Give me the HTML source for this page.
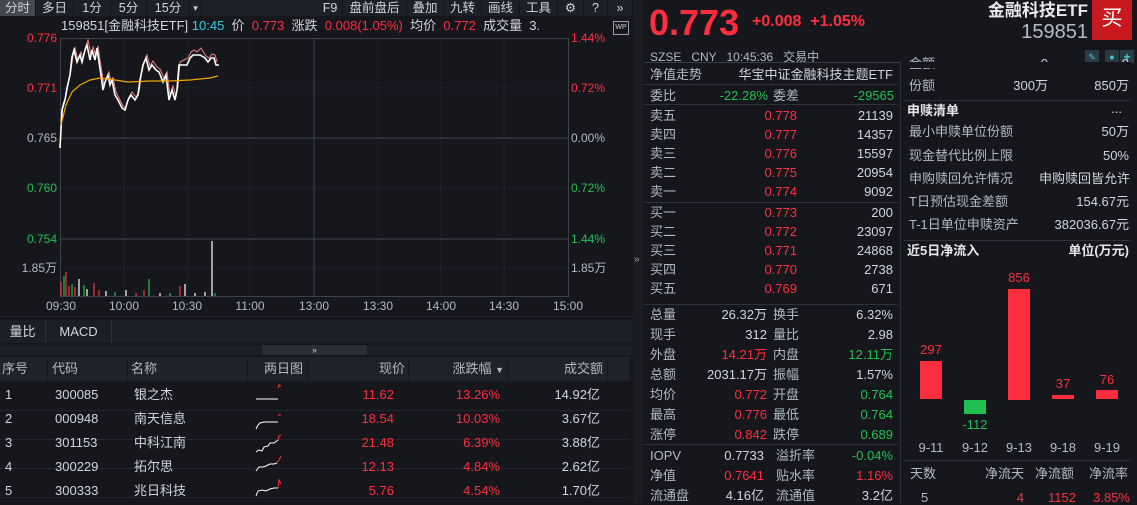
<!DOCTYPE html>
<html><head><meta charset="utf-8"><style>
*{margin:0;padding:0;box-sizing:border-box}
body{width:1137px;height:503px;background:#15171c;color:#d2d6dc;font-family:"Liberation Sans","Noto Sans CJK SC",sans-serif;font-size:12px;position:relative;overflow:hidden}
.a{position:absolute;white-space:nowrap;line-height:14px}
.r{color:#ff2e3e}.g{color:#20c050}.l{color:#b4b9c0}
.ra{text-align:right}
.hl{position:absolute;height:1px;background:#2e323a}
.vl{position:absolute;width:1px;background:#2e323a}
.tb{position:absolute;top:0;height:16px;background:#1d2027;line-height:16px;font-size:12.5px;color:#d0d4da;text-align:center;border-right:1px solid #121418}
</style></head><body>
<!-- toolbar -->
<div class="tb" style="left:0;width:36px;background:#454850">分时</div>
<div class="tb" style="left:36px;width:38px">多日</div>
<div class="tb" style="left:74px;width:37px">1分</div>
<div class="tb" style="left:111px;width:36px">5分</div>
<div class="tb" style="left:147px;width:43px">15分</div>
<div class="tb" style="left:190px;width:12px;font-size:9px">▾</div>
<div class="tb" style="left:202px;width:116px;background:#1d2027;border:none"></div>
<div class="tb" style="left:318px;width:25px">F9</div>
<div class="tb" style="left:343px;width:64px">盘前盘后</div>
<div class="tb" style="left:407px;width:37px">叠加</div>
<div class="tb" style="left:444px;width:38px">九转</div>
<div class="tb" style="left:482px;width:38px">画线</div>
<div class="tb" style="left:520px;width:38px">工具</div>
<div class="tb" style="left:558px;width:26px">⚙</div>
<div class="tb" style="left:584px;width:24px">?</div>
<div class="tb" style="left:608px;width:25px">»</div>
<!-- info line -->
<div class="a" style="left:61px;top:19px;font-size:13px">159851[金融科技ETF] <span style="color:#2fd0e0">10:45</span> &nbsp;价 &nbsp;<span class="r">0.773</span> &nbsp;涨跌 &nbsp;<span class="r">0.008(1.05%)</span> &nbsp;均价 &nbsp;<span class="r">0.772</span> &nbsp;成交量 &nbsp;3.</div>
<div class="a" style="left:613px;top:21px;width:16px;height:14px;border:1px solid #9aa0a8;font-size:7px;line-height:12px;text-align:center;color:#cfd3d8">WP</div>
<!-- chart svg -->
<svg class="a" style="left:0;top:0" width="640" height="318">
<g stroke="#3a3e46" stroke-dasharray="1,3" fill="none">
<line x1="60" y1="88" x2="568" y2="88"/><line x1="60" y1="188" x2="568" y2="188"/><line x1="60" y1="268" x2="568" y2="268"/>
<line x1="124" y1="38" x2="124" y2="296"/><line x1="187" y1="38" x2="187" y2="296"/><line x1="250" y1="38" x2="250" y2="296"/>
<line x1="378" y1="38" x2="378" y2="296"/><line x1="441" y1="38" x2="441" y2="296"/><line x1="504" y1="38" x2="504" y2="296"/>
</g>
<g stroke="#3e424a" fill="none">
<rect x="60.5" y="38.5" width="508" height="258"/>
<line x1="60" y1="138" x2="568" y2="138"/><line x1="60" y1="239" x2="568" y2="239"/>
<line x1="314" y1="38" x2="314" y2="296"/>
</g>
<polyline fill="none" stroke="#f08080" stroke-width="1" points="61,130 63,104 66,96 68,84 71,70 73,55 75,48 78,60 81,52 83,58 86,46 88,40 91,55 93,47 96,56 98,46 100,60 102,73 104,86 106,80 109,72 111,82 113,78 116,92 119,98 123,106 126,108 129,97 132,92 136,97 139,92 141,77 144,62 147,55 150,66 153,61 157,67 160,69 164,78 167,72 170,96 173,86 176,96 178,86 180,62 184,60 188,58 191,52 194,50 197,52 201,48 206,56 209,58 212,54 215,55 217,62"/>
<polyline fill="none" stroke="#ffffff" stroke-width="1.6" points="60,148 62,110 65,100 67,88 70,75 72,57 74,50 77,62 80,55 82,62 85,50 87,45 90,60 92,50 95,60 97,48 99,62 101,75 103,90 105,82 108,75 110,85 112,80 115,95 118,100 122,108 125,110 128,100 131,95 135,100 138,95 140,80 143,65 146,58 149,70 152,65 156,70 159,72 163,82 166,75 169,100 172,90 175,100 177,90 179,65 183,65 187,65 190,58 193,55 196,55 200,55 205,58 208,62 211,58 214,58 216,65 219,65"/>
<polyline fill="none" stroke="#f0a800" stroke-width="1.2" points="61,125 66,105 72,92 80,85 90,80 100,78 115,80 128,82 150,81 170,81 190,80 210,78 218,76"/>
<g stroke-width="1.2">
<line x1="61" y1="296" x2="61" y2="282" stroke="#ff3040"/><line x1="64" y1="296" x2="64" y2="276" stroke="#20c050"/><line x1="66" y1="296" x2="66" y2="272" stroke="#ff3040"/><line x1="69" y1="296" x2="69" y2="286" stroke="#ff3040"/><line x1="72" y1="296" x2="72" y2="284" stroke="#20c050"/><line x1="75" y1="296" x2="75" y2="287" stroke="#ff3040"/><line x1="79" y1="296" x2="79" y2="279" stroke="#fff"/><line x1="84" y1="296" x2="84" y2="285" stroke="#20c050"/><line x1="87" y1="296" x2="87" y2="289" stroke="#fff"/><line x1="94" y1="296" x2="94" y2="283" stroke="#ff3040"/><line x1="99" y1="296" x2="99" y2="290" stroke="#ff3040"/><line x1="106" y1="296" x2="106" y2="291" stroke="#fff"/><line x1="115" y1="296" x2="115" y2="292" stroke="#20c050"/><line x1="126" y1="296" x2="126" y2="290" stroke="#fff"/><line x1="136" y1="296" x2="136" y2="293" stroke="#ff3040"/><line x1="144" y1="296" x2="144" y2="290" stroke="#ff3040"/><line x1="149" y1="296" x2="149" y2="279" stroke="#20c050"/><line x1="160" y1="296" x2="160" y2="293" stroke="#fff"/><line x1="170" y1="296" x2="170" y2="293" stroke="#20c050"/><line x1="180" y1="296" x2="180" y2="286" stroke="#ff3040"/><line x1="185" y1="296" x2="185" y2="284" stroke="#fff"/><line x1="195" y1="296" x2="195" y2="293" stroke="#fff"/><line x1="205" y1="296" x2="205" y2="292" stroke="#fff"/><line x1="212" y1="296" x2="212" y2="241" stroke="#fff"/><line x1="215" y1="296" x2="215" y2="293" stroke="#20c050"/>
</g>
<g font-size="12" font-family="Liberation Sans" text-anchor="end">
<text x="57" y="42" fill="#ff3040">0.776</text><text x="57" y="92" fill="#ff3040">0.771</text><text x="57" y="142" fill="#b4b9c0">0.765</text><text x="57" y="192" fill="#20c050">0.760</text><text x="57" y="243" fill="#20c050">0.754</text><text x="57" y="272" fill="#b4b9c0" font-family="Liberation Sans,Noto Sans CJK SC">1.85万</text>
</g>
<g font-size="12" font-family="Liberation Sans">
<text x="571" y="42" fill="#ff3040">1.44%</text><text x="571" y="92" fill="#ff3040">0.72%</text><text x="571" y="142" fill="#b4b9c0">0.00%</text><text x="571" y="192" fill="#20c050">0.72%</text><text x="571" y="243" fill="#20c050">1.44%</text><text x="571" y="272" fill="#b4b9c0" font-family="Liberation Sans,Noto Sans CJK SC">1.85万</text>
</g>
<g font-size="12" font-family="Liberation Sans" fill="#b4b9c0" text-anchor="middle">
<text x="61" y="310">09:30</text><text x="124" y="310">10:00</text><text x="187" y="310">10:30</text><text x="250" y="310">11:00</text><text x="314" y="310">13:00</text><text x="378" y="310">13:30</text><text x="441" y="310">14:00</text><text x="504" y="310">14:30</text><text x="568" y="310">15:00</text>
</g>
</svg>
<div class="hl" style="left:0;top:316px;width:633px;background:#24272e"></div>
<!-- bottom tabs -->
<div class="a" style="left:0;top:320px;width:633px;height:23px;background:#1b1e24"></div>
<div class="a" style="left:0;top:320px;width:46px;height:23px;line-height:23px;text-align:center;border-right:1px solid #2e323a;font-size:13px">量比</div>
<div class="a" style="left:46px;top:320px;width:66px;height:23px;line-height:23px;text-align:center;border-right:1px solid #2e323a;font-size:13px">MACD</div>
<div class="a" style="left:0;top:345px;width:633px;height:10px;background:#1b1e24"></div>
<div class="a" style="left:262px;top:345px;width:105px;height:10px;background:#2a2d34;font-size:9px;line-height:10px;text-align:center;color:#ccc">»</div>
<!-- table header -->
<div class="a" style="left:0;top:357px;width:630px;height:24px;background:#1f2229"></div>
<div class="vl" style="left:47px;top:357px;height:24px;background:#15171c"></div><div class="vl" style="left:127px;top:357px;height:24px;background:#15171c"></div><div class="vl" style="left:247px;top:357px;height:24px;background:#15171c"></div><div class="vl" style="left:307px;top:357px;height:24px;background:#15171c"></div><div class="vl" style="left:408px;top:357px;height:24px;background:#15171c"></div><div class="vl" style="left:507px;top:357px;height:24px;background:#15171c"></div><div class="vl" style="left:607px;top:357px;height:24px;background:#15171c"></div>
<div class="a l" style="left:2px;top:362px;font-size:13px">序号</div>
<div class="a l" style="left:52px;top:362px;font-size:13px">代码</div>
<div class="a l" style="left:131px;top:362px;font-size:13px">名称</div>
<div class="a l ra" style="left:247px;width:56px;top:362px;font-size:13px">两日图</div>
<div class="a l ra" style="left:308px;width:97px;top:362px;font-size:13px">现价</div>
<div class="a l ra" style="left:408px;width:96px;top:362px;font-size:13px">涨跌幅 <span style="font-size:9px">▼</span></div>
<div class="a l ra" style="left:508px;width:95px;top:362px;font-size:13px">成交额</div>
<!-- rows -->
<div class="a" style="left:0;top:382px;width:630px;height:122px;font-size:13px">
<div class="hl" style="left:0;top:28px;width:630px;background:#22252c"></div><div class="hl" style="left:0;top:57px;width:630px;background:#22252c"></div><div class="hl" style="left:0;top:86px;width:630px;background:#22252c"></div><div class="hl" style="left:0;top:115px;width:630px;background:#22252c"></div>
</div>
<div class="a" style="left:5px;top:388px;font-size:13px">1</div><div class="a" style="left:55px;top:388px;font-size:13px">300085</div><div class="a" style="left:134px;top:388px;font-size:13px">银之杰</div><div class="a r ra" style="left:300px;width:94px;top:388px;font-size:13px">11.62</div><div class="a r ra" style="left:400px;width:100px;top:388px;font-size:13px">13.26%</div><div class="a ra" style="left:500px;width:100px;top:388px;font-size:13px">14.92亿</div>
<div class="a" style="left:5px;top:412px;font-size:13px">2</div><div class="a" style="left:55px;top:412px;font-size:13px">000948</div><div class="a" style="left:134px;top:412px;font-size:13px">南天信息</div><div class="a r ra" style="left:300px;width:94px;top:412px;font-size:13px">18.54</div><div class="a r ra" style="left:400px;width:100px;top:412px;font-size:13px">10.03%</div><div class="a ra" style="left:500px;width:100px;top:412px;font-size:13px">3.67亿</div>
<div class="a" style="left:5px;top:436px;font-size:13px">3</div><div class="a" style="left:55px;top:436px;font-size:13px">301153</div><div class="a" style="left:134px;top:436px;font-size:13px">中科江南</div><div class="a r ra" style="left:300px;width:94px;top:436px;font-size:13px">21.48</div><div class="a r ra" style="left:400px;width:100px;top:436px;font-size:13px">6.39%</div><div class="a ra" style="left:500px;width:100px;top:436px;font-size:13px">3.88亿</div>
<div class="a" style="left:5px;top:460px;font-size:13px">4</div><div class="a" style="left:55px;top:460px;font-size:13px">300229</div><div class="a" style="left:134px;top:460px;font-size:13px">拓尔思</div><div class="a r ra" style="left:300px;width:94px;top:460px;font-size:13px">12.13</div><div class="a r ra" style="left:400px;width:100px;top:460px;font-size:13px">4.84%</div><div class="a ra" style="left:500px;width:100px;top:460px;font-size:13px">2.62亿</div>
<div class="a" style="left:5px;top:484px;font-size:13px">5</div><div class="a" style="left:55px;top:484px;font-size:13px">300333</div><div class="a" style="left:134px;top:484px;font-size:13px">兆日科技</div><div class="a r ra" style="left:300px;width:94px;top:484px;font-size:13px">5.76</div><div class="a r ra" style="left:400px;width:100px;top:484px;font-size:13px">4.54%</div><div class="a ra" style="left:500px;width:100px;top:484px;font-size:13px">1.70亿</div>
<svg class="a" style="left:250px;top:383px" width="40" height="120" fill="none" stroke-width="1">
<polyline stroke="#fff" points="6,16 28,16"/><polyline stroke="#ff3040" points="28,5 29,2 31,3"/>
<polyline stroke="#fff" points="6,46 8,42 10,40 14,39 28,39"/><polyline stroke="#ff3040" points="28,32 31,32"/>
<polyline stroke="#fff" points="6,69 9,67 12,68 14,64 18,63 20,60 24,60 28,57"/><polyline stroke="#ff3040" points="28,57 29,53 31,52"/>
<polyline stroke="#fff" points="6,88 9,84 13,84 16,83 20,81 24,81 27,80"/><polyline stroke="#ff3040" points="27,80 29,77 31,73"/>
<polyline stroke="#fff" points="6,113 8,108 12,107 16,108 20,106 24,105 28,105"/><polyline stroke="#ff3040" points="28,105 29,97 31,101"/>
</svg>
<!-- separator strip -->
<div class="a" style="left:633px;top:0;width:10px;height:503px;background:#1b1d22"></div>
<div class="a" style="left:634px;top:253px;font-size:10px;color:#aaa">»</div>
<!-- right header -->
<div class="a r" style="left:649px;top:4px;font-size:36px;line-height:38px;font-weight:bold">0.773</div>
<div class="a r" style="left:752px;top:15px;font-size:16px;font-weight:bold">+0.008 &nbsp;+1.05%</div>
<div class="a ra" style="left:940px;width:148px;top:2px;font-size:17px;line-height:18px;font-weight:bold;color:#e8e8ea">金融科技ETF</div>
<div class="a ra" style="left:940px;width:148px;top:22px;font-size:20px;line-height:20px;color:#b8bcc2">159851</div>
<div class="a" style="left:1092px;top:0;width:40px;height:40px;background:#c8191e;color:#fff;font-size:21px;line-height:38px;text-align:center">买</div>
<div class="a l" style="left:650px;top:50px;font-size:12px">SZSE &nbsp;&nbsp;CNY &nbsp;&nbsp;10:45:36 &nbsp;&nbsp;交易中</div>
<div class="a" style="left:1085px;top:50px;width:14px;height:13px;background:#2a3b44;color:#4cc;font-size:9px;text-align:center">✎</div>
<div class="a" style="left:1105px;top:50px;width:14px;height:13px;background:#2a3b44;color:#4cc;font-size:9px;text-align:center">●</div>
<div class="a" style="left:1120px;top:50px;width:14px;height:13px;background:#2a3b44;color:#4cc;font-size:12px;text-align:center;font-weight:bold">+</div>
<div class="hl" style="left:644px;top:62px;width:488px;background:#3a3e46"></div>
<div class="vl" style="left:900px;top:62px;height:441px;background:#2e323a"></div>
<!-- order book -->
<div class="a l" style="left:650px;top:68px;font-size:13px">净值走势</div><div class="a ra" style="left:700px;width:193px;top:68px;font-size:13px">华宝中证金融科技主题ETF</div>
<div class="hl" style="left:644px;top:84px;width:254px"></div>
<div class="a l" style="left:650px;top:89px;font-size:13px">委比</div><div class="a g ra" style="left:680px;width:88px;top:89px;font-size:13px">-22.28%</div><div class="a l" style="left:773px;top:89px;font-size:13px">委差</div><div class="a g ra" style="left:800px;width:94px;top:89px;font-size:13px">-29565</div>
<div class="hl" style="left:644px;top:104px;width:254px"></div>
<div style="position:absolute;left:0;top:0;font-size:13px">
<div class="a l" style="left:650px;top:109px">卖五</div><div class="a r ra" style="left:740px;width:57px;top:109px">0.778</div><div class="a ra" style="left:800px;width:93px;top:109px">21139</div>
<div class="a l" style="left:650px;top:128px">卖四</div><div class="a r ra" style="left:740px;width:57px;top:128px">0.777</div><div class="a ra" style="left:800px;width:93px;top:128px">14357</div>
<div class="a l" style="left:650px;top:147px">卖三</div><div class="a r ra" style="left:740px;width:57px;top:147px">0.776</div><div class="a ra" style="left:800px;width:93px;top:147px">15597</div>
<div class="a l" style="left:650px;top:166px">卖二</div><div class="a r ra" style="left:740px;width:57px;top:166px">0.775</div><div class="a ra" style="left:800px;width:93px;top:166px">20954</div>
<div class="a l" style="left:650px;top:185px">卖一</div><div class="a r ra" style="left:740px;width:57px;top:185px">0.774</div><div class="a ra" style="left:800px;width:93px;top:185px">9092</div>
<div class="a l" style="left:650px;top:206px">买一</div><div class="a r ra" style="left:740px;width:57px;top:206px">0.773</div><div class="a ra" style="left:800px;width:93px;top:206px">200</div>
<div class="a l" style="left:650px;top:225px">买二</div><div class="a r ra" style="left:740px;width:57px;top:225px">0.772</div><div class="a ra" style="left:800px;width:93px;top:225px">23097</div>
<div class="a l" style="left:650px;top:244px">买三</div><div class="a r ra" style="left:740px;width:57px;top:244px">0.771</div><div class="a ra" style="left:800px;width:93px;top:244px">24868</div>
<div class="a l" style="left:650px;top:263px">买四</div><div class="a r ra" style="left:740px;width:57px;top:263px">0.770</div><div class="a ra" style="left:800px;width:93px;top:263px">2738</div>
<div class="a l" style="left:650px;top:282px">买五</div><div class="a r ra" style="left:740px;width:57px;top:282px">0.769</div><div class="a ra" style="left:800px;width:93px;top:282px">671</div>
<div class="a l" style="left:650px;top:308px">总量</div><div class="a ra" style="left:680px;width:87px;top:308px">26.32万</div><div class="a l" style="left:773px;top:308px">换手</div><div class="a ra" style="left:800px;width:93px;top:308px">6.32%</div>
<div class="a l" style="left:650px;top:328px">现手</div><div class="a ra" style="left:680px;width:87px;top:328px">312</div><div class="a l" style="left:773px;top:328px">量比</div><div class="a ra" style="left:800px;width:93px;top:328px">2.98</div>
<div class="a l" style="left:650px;top:348px">外盘</div><div class="a r ra" style="left:680px;width:87px;top:348px">14.21万</div><div class="a l" style="left:773px;top:348px">内盘</div><div class="a g ra" style="left:800px;width:93px;top:348px">12.11万</div>
<div class="a l" style="left:650px;top:368px">总额</div><div class="a ra" style="left:680px;width:87px;top:368px">2031.17万</div><div class="a l" style="left:773px;top:368px">振幅</div><div class="a ra" style="left:800px;width:93px;top:368px">1.57%</div>
<div class="a l" style="left:650px;top:388px">均价</div><div class="a r ra" style="left:680px;width:87px;top:388px">0.772</div><div class="a l" style="left:773px;top:388px">开盘</div><div class="a g ra" style="left:800px;width:93px;top:388px">0.764</div>
<div class="a l" style="left:650px;top:408px">最高</div><div class="a r ra" style="left:680px;width:87px;top:408px">0.776</div><div class="a l" style="left:773px;top:408px">最低</div><div class="a g ra" style="left:800px;width:93px;top:408px">0.764</div>
<div class="a l" style="left:650px;top:428px">涨停</div><div class="a r ra" style="left:680px;width:87px;top:428px">0.842</div><div class="a l" style="left:773px;top:428px">跌停</div><div class="a g ra" style="left:800px;width:93px;top:428px">0.689</div>
<div class="a l" style="left:650px;top:449px">IOPV</div><div class="a ra" style="left:680px;width:84px;top:449px">0.7733</div><div class="a l" style="left:776px;top:449px">溢折率</div><div class="a g ra" style="left:800px;width:93px;top:449px">-0.04%</div>
<div class="a l" style="left:650px;top:469px">净值</div><div class="a r ra" style="left:680px;width:84px;top:469px">0.7641</div><div class="a l" style="left:776px;top:469px">贴水率</div><div class="a r ra" style="left:800px;width:93px;top:469px">1.16%</div>
<div class="a l" style="left:650px;top:489px">流通盘</div><div class="a ra" style="left:680px;width:84px;top:489px">4.16亿</div><div class="a l" style="left:776px;top:489px">流通值</div><div class="a ra" style="left:800px;width:93px;top:489px">3.2亿</div>
</div>
<div class="hl" style="left:644px;top:202px;width:254px"></div>
<div class="hl" style="left:644px;top:304px;width:254px"></div>
<div class="hl" style="left:644px;top:444px;width:254px"></div>
<!-- right info -->
<div style="position:absolute;left:0;top:0;font-size:13px">
<div class="a l" style="left:909px;top:57px">金额</div><div class="a ra" style="left:1000px;width:48px;top:57px">0</div><div class="a ra" style="left:1060px;width:69px;top:57px">0</div>
<div class="a" style="left:901px;top:62px;width:230px;height:6px;background:#15171c"></div>
<div class="a l" style="left:909px;top:79px">份额</div><div class="a ra" style="left:1000px;width:48px;top:79px">300万</div><div class="a ra" style="left:1060px;width:69px;top:79px">850万</div>
<div class="a" style="left:907px;top:104px;font-weight:bold;color:#e6e8ea">申赎清单</div><div class="a ra" style="left:1080px;width:42px;top:102px">...</div>
<div class="a l" style="left:909px;top:125px">最小申赎单位份额</div><div class="a ra" style="left:1040px;width:89px;top:125px">50万</div>
<div class="a l" style="left:909px;top:149px">现金替代比例上限</div><div class="a ra" style="left:1040px;width:89px;top:149px">50%</div>
<div class="a l" style="left:909px;top:172px">申购赎回允许情况</div><div class="a ra" style="left:1020px;width:110px;top:172px">申购赎回皆允许</div>
<div class="a l" style="left:909px;top:195px">T日预估现金差额</div><div class="a ra" style="left:1040px;width:89px;top:195px">154.67元</div>
<div class="a l" style="left:909px;top:218px">T-1日单位申赎资产</div><div class="a ra" style="left:1030px;width:99px;top:218px">382036.67元</div>
<div class="a" style="left:907px;top:244px;font-weight:bold;color:#e6e8ea">近5日净流入</div><div class="a ra" style="left:1040px;width:89px;top:244px;font-weight:bold;color:#e6e8ea">单位(万元)</div>
</div>
<div class="hl" style="left:903px;top:100px;width:228px"></div>
<div class="hl" style="left:903px;top:240px;width:228px"></div>
<div class="hl" style="left:903px;top:460px;width:228px"></div>
<!-- bars -->
<div class="a" style="left:920px;top:361px;width:22px;height:38px;background:#ff2e3e"></div>
<div class="a" style="left:964px;top:400px;width:22px;height:14px;background:#20c050"></div>
<div class="a" style="left:1008px;top:289px;width:22px;height:111px;background:#ff2e3e"></div>
<div class="a" style="left:1052px;top:395px;width:22px;height:4px;background:#ff2e3e"></div>
<div class="a" style="left:1096px;top:390px;width:22px;height:9px;background:#ff2e3e"></div>
<div style="position:absolute;left:0;top:0;font-size:13px">
<div class="a r" style="left:920px;width:22px;top:343px;text-align:center">297</div>
<div class="a g" style="left:955px;width:40px;top:418px;text-align:center">-112</div>
<div class="a r" style="left:1008px;width:22px;top:271px;text-align:center">856</div>
<div class="a r" style="left:1052px;width:22px;top:377px;text-align:center">37</div>
<div class="a r" style="left:1096px;width:22px;top:373px;text-align:center">76</div>
<div class="a l" style="left:911px;width:40px;top:441px;text-align:center">9-11</div>
<div class="a l" style="left:955px;width:40px;top:441px;text-align:center">9-12</div>
<div class="a l" style="left:999px;width:40px;top:441px;text-align:center">9-13</div>
<div class="a l" style="left:1043px;width:40px;top:441px;text-align:center">9-18</div>
<div class="a l" style="left:1087px;width:40px;top:441px;text-align:center">9-19</div>
<div class="a l" style="left:910px;top:467px">天数</div><div class="a l" style="left:985px;top:467px">净流天</div><div class="a l" style="left:1035px;top:467px">净流额</div><div class="a l" style="left:1089px;top:467px">净流率</div>
<div class="a l" style="left:921px;top:491px">5</div><div class="a r ra" style="left:990px;width:34px;top:491px">4</div><div class="a r ra" style="left:1030px;width:46px;top:491px">1152</div><div class="a r ra" style="left:1080px;width:50px;top:491px">3.85%</div>
</div>
</body></html>
